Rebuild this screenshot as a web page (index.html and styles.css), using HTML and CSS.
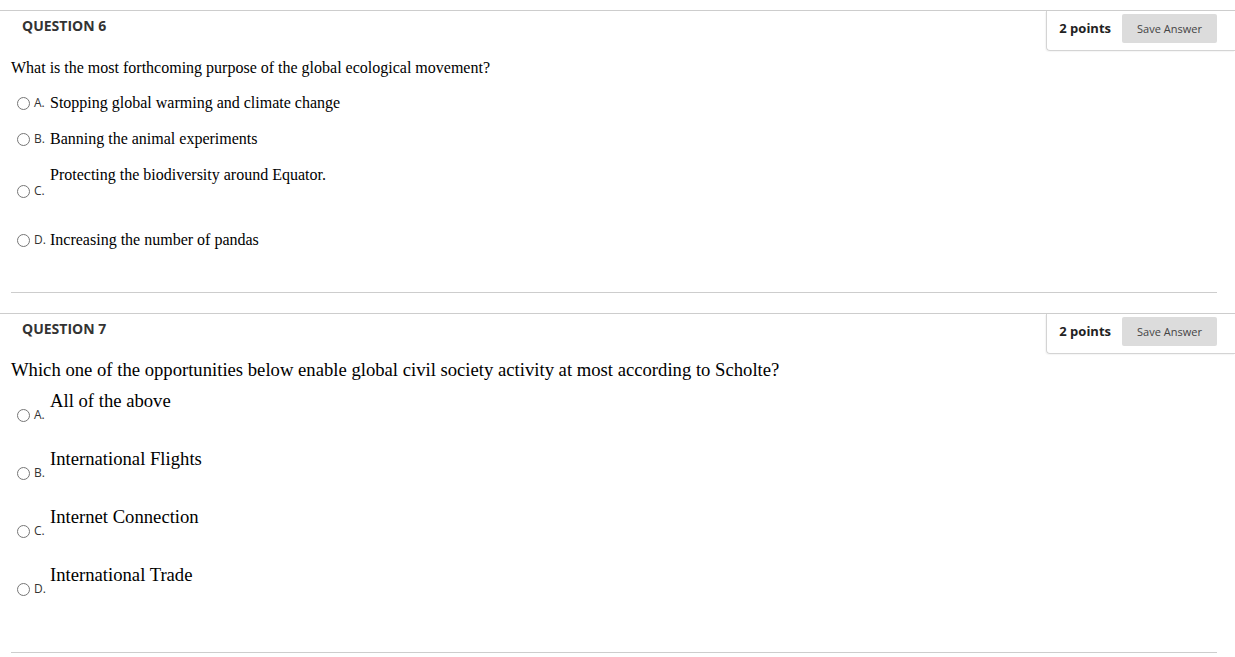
FILE: index.html
```html
<!DOCTYPE html>
<html>
<head>
<meta charset="utf-8">
<link rel="stylesheet" href="styles.css">
</head>
<body>
<div class="page">
  <section class="question q6">
    <div class="q-head">
      <h3 class="q-title">QUESTION 6</h3>
      <div class="q-box">
        <span class="points">2 points</span>
        <button class="save">Save Answer</button>
      </div>
    </div>
    <div class="q-body">
      <p class="q-text">What is the most forthcoming purpose of the global ecological movement?</p>
      <ul class="opts">
        <li class="opt inline"><span class="mark"><input type="radio" name="q6"><span class="letter">A.</span></span><span class="ans">Stopping global warming and climate change</span></li>
        <li class="opt inline"><span class="mark"><input type="radio" name="q6"><span class="letter">B.</span></span><span class="ans">Banning the animal experiments</span></li>
        <li class="opt stack"><span class="ans">Protecting the biodiversity around Equator.</span><span class="mark"><input type="radio" name="q6"><span class="letter">C.</span></span></li>
        <li class="opt inline last"><span class="mark"><input type="radio" name="q6"><span class="letter">D.</span></span><span class="ans">Increasing the number of pandas</span></li>
      </ul>
    </div>
  </section>
  <section class="question q7">
    <div class="q-head">
      <h3 class="q-title">QUESTION 7</h3>
      <div class="q-box">
        <span class="points">2 points</span>
        <button class="save">Save Answer</button>
      </div>
    </div>
    <div class="q-body">
      <p class="q-text">Which one of the opportunities below enable global civil society activity at most according to Scholte?</p>
      <ul class="opts">
        <li class="opt stack"><span class="ans">All of the above</span><span class="mark"><input type="radio" name="q7"><span class="letter">A.</span></span></li>
        <li class="opt stack"><span class="ans">International Flights</span><span class="mark"><input type="radio" name="q7"><span class="letter">B.</span></span></li>
        <li class="opt stack"><span class="ans">Internet Connection</span><span class="mark"><input type="radio" name="q7"><span class="letter">C.</span></span></li>
        <li class="opt stack last"><span class="ans">International Trade</span><span class="mark"><input type="radio" name="q7"><span class="letter">D.</span></span></li>
      </ul>
    </div>
  </section>
</div>
</body>
</html>
```
FILE: styles.css
```css
html, body {
  margin: 0;
  padding: 0;
  background: #fff;
}
.page {
  padding-top: 10px;
}
.question {
  border-top: 1px solid #cdcdcd;
}
.q7 {
  margin-top: 20px;
}
.q-head {
  display: flex;
  justify-content: space-between;
  height: 40px;
}
.q-title {
  margin: 0;
  padding: 6px 0 0 22px;
  font-family: "Open Sans", sans-serif;
  font-weight: 700;
  font-size: 14px;
  line-height: 18px;
  color: #333;
}
.q-box {
  display: flex;
  align-items: flex-start;
  gap: 11px;
  padding: 3px 18px 0 12px;
  border-left: 1px solid #d4d4d4;
  border-bottom: 1px solid #d4d4d4;
  border-bottom-left-radius: 4px;
  box-shadow: -1px 1px 1px rgba(0,0,0,0.04);
  box-sizing: border-box;
  height: 40px;
}
.points {
  font-family: "Open Sans", sans-serif;
  font-weight: 700;
  font-size: 13px;
  line-height: 29px;
  color: #222;
}
.save {
  width: 95px;
  height: 29px;
  border: none;
  border-radius: 2px;
  background: #dcdcdc;
  font-family: "Open Sans", sans-serif;
  font-size: 11px;
  color: #444;
  padding: 0;
}
.q-body {
  margin: 0 18px 0 11px;
  border-bottom: 1px solid #cdcdcd;
}
.q-text {
  margin: 0;
  font-family: "Liberation Serif", serif;
  color: #000;
}
.q6 .q-text {
  margin-top: 7px;
  font-size: 16px;
  line-height: 20px;
}
.q7 .q-text {
  margin-top: 6px;
  font-size: 18.67px;
  line-height: 20px;
}
.opts {
  list-style: none;
  margin: 0;
  padding: 0 0 0 6px;
}
.opt {
  display: grid;
  grid-template-columns: 33px auto;
  justify-content: start;
  font-family: "Liberation Serif", serif;
  color: #000;
}
.q6 .opt {
  font-size: 16px;
  line-height: 20px;
  margin-top: 15px;
}
.q6 .opt + .opt {
  margin-top: 16px;
}
.q6 .opt.stack {
  line-height: 18px;
  margin-top: 17px;
}
.q6 .opt.stack .mark {
  height: 14px;
}
.q6 .opt.stack + .opt {
  margin-top: 32px;
}
.q6 .opt.last {
  margin-bottom: 42px;
}
.q7 .opt {
  font-size: 18.67px;
  line-height: 20px;
  margin-top: 11px;
}
.q7 .opt + .opt {
  margin-top: 27px;
}
.q7 .opt .mark {
  margin-top: -3px;
  height: 14px;
}
.q7 .opt.last {
  margin-bottom: 56px;
}
.stack .ans {
  grid-column: 2;
  grid-row: 1;
}
.stack .mark {
  grid-column: 1 / 3;
  grid-row: 2;
}
.mark {
  display: flex;
  align-items: center;
}
.mark input {
  margin: 0;
  width: 13px;
  height: 13px;
}
.letter {
  margin-left: 4px;
  font-family: "Open Sans", sans-serif;
  font-size: 12px;
  color: #333;
}
```
